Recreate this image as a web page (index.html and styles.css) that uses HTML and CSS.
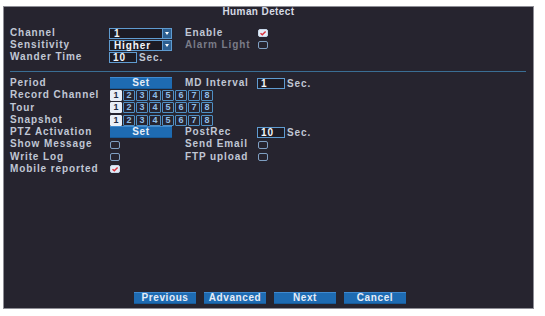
FILE: index.html
```html
<!DOCTYPE html>
<html>
<head>
<meta charset="utf-8">
<link rel="stylesheet" href="styles.css">
</head>
<body>
<div class="panel">
  <div class="title">Human Detect</div>
  <div class="form">
    <div class="lbl">Channel</div>
    <div class="ctl"><div class="select"><span class="val">1</span><span class="arrow"></span></div></div>
    <div class="lbl">Enable</div>
    <div class="ctl"><span class="chk on"><svg viewBox="0 0 10 8" width="10" height="8"><path d="M2.5 4.2 L4.3 5.8 L7.6 2.4" fill="none" stroke="#d8303c" stroke-width="1.4"/></svg></span></div>

    <div class="lbl">Sensitivity</div>
    <div class="ctl"><div class="select"><span class="val">Higher</span><span class="arrow"></span></div></div>
    <div class="lbl dim">Alarm Light</div>
    <div class="ctl"><span class="chk"></span></div>

    <div class="lbl">Wander Time</div>
    <div class="ctl wide"><span class="box small">10</span><span class="unit">Sec.</span></div>
  </div>
  <div class="divider"></div>
  <div class="form lower">
    <div class="lbl">Period</div>
    <div class="ctl"><span class="btn set">Set</span></div>
    <div class="lbl">MD Interval</div>
    <div class="ctl"><span class="box small">1</span><span class="unit">Sec.</span></div>

    <div class="lbl">Record Channel</div>
    <div class="ctl wide"><div class="nums"><span class="num sel">1</span><span class="num">2</span><span class="num">3</span><span class="num">4</span><span class="num">5</span><span class="num">6</span><span class="num">7</span><span class="num">8</span></div></div>

    <div class="lbl">Tour</div>
    <div class="ctl wide"><div class="nums"><span class="num sel">1</span><span class="num">2</span><span class="num">3</span><span class="num">4</span><span class="num">5</span><span class="num">6</span><span class="num">7</span><span class="num">8</span></div></div>

    <div class="lbl">Snapshot</div>
    <div class="ctl wide"><div class="nums"><span class="num sel">1</span><span class="num">2</span><span class="num">3</span><span class="num">4</span><span class="num">5</span><span class="num">6</span><span class="num">7</span><span class="num">8</span></div></div>

    <div class="lbl">PTZ Activation</div>
    <div class="ctl"><span class="btn set">Set</span></div>
    <div class="lbl">PostRec</div>
    <div class="ctl"><span class="box small">10</span><span class="unit">Sec.</span></div>

    <div class="lbl">Show Message</div>
    <div class="ctl"><span class="chk"></span></div>
    <div class="lbl">Send Email</div>
    <div class="ctl"><span class="chk"></span></div>

    <div class="lbl">Write Log</div>
    <div class="ctl"><span class="chk"></span></div>
    <div class="lbl">FTP upload</div>
    <div class="ctl"><span class="chk"></span></div>

    <div class="lbl">Mobile reported</div>
    <div class="ctl"><span class="chk on"><svg viewBox="0 0 10 8" width="10" height="8"><path d="M2.5 4.2 L4.3 5.8 L7.6 2.4" fill="none" stroke="#d8303c" stroke-width="1.4"/></svg></span></div>
  </div>
  <div class="spacer"></div>
  <div class="buttons">
    <span class="btn">Previous</span>
    <span class="btn">Advanced</span>
    <span class="btn">Next</span>
    <span class="btn">Cancel</span>
  </div>
</div>
</body>
</html>
```
FILE: styles.css
```css
html, body {
  margin: 0;
  padding: 0;
  background: #ffffff;
}
body {
  font-family: "Liberation Sans", Arial, sans-serif;
  font-size: 10px;
  font-weight: bold;
  letter-spacing: 0.9px;
}
.panel {
  margin: 6px 0 0 3px;
  width: 531px;
  height: 303px;
  box-sizing: border-box;
  border: 1px solid #8e8e96;
  background: #26242f;
  display: flex;
  flex-direction: column;
}
.title {
  height: 9px;
  line-height: 9px;
  text-align: center;
  color: #d6dae4;
  letter-spacing: 0.4px;
  margin-left: -20px;
}
.form {
  display: grid;
  grid-template-columns: 99px 76px 72px 1fr;
  grid-auto-rows: 12px;
  padding-left: 6px;
  margin-top: 11px;
}
.form.lower {
  margin-top: 5px;
  grid-auto-rows: 12.3px;
}
.lbl {
  color: #c0c7d5;
  line-height: 12px;
  white-space: nowrap;
}
.lbl.dim {
  color: #7a7c88;
}
.ctl {
  display: flex;
  align-items: center;
  gap: 3px;
}
.ctl.wide {
  grid-column: 2 / span 3;
}
.select {
  width: 63px;
  height: 11px;
  box-sizing: border-box;
  border: 1px solid #5f9bd0;
  background: #1c1b25;
  display: flex;
  align-items: center;
}
.select .val {
  flex: 1;
  color: #f4f6fa;
  padding-left: 4px;
  line-height: 9px;
}
.select .arrow {
  width: 8px;
  height: 9px;
  background: #2d5f90;
  border-left: 1px solid #5f9bd0;
  position: relative;
}
.select .arrow::after {
  content: "";
  position: absolute;
  left: 2px;
  top: 3px;
  border-left: 2px solid transparent;
  border-right: 2px solid transparent;
  border-top: 3px solid #ffffff;
}
.box {
  height: 11px;
  box-sizing: border-box;
  border: 1px solid #5f9bd0;
  background: #1c1b25;
  color: #f4f6fa;
  line-height: 9px;
  padding-left: 3px;
}
.box.small {
  width: 28px;
}
.unit {
  color: #c0c7d5;
  margin-left: -1px;
}
.chk {
  width: 10px;
  height: 8px;
  box-sizing: border-box;
  border: 1px solid #7f9fc2;
  border-radius: 2px;
  background: transparent;
  display: block;
  margin-left: 1px;
}
.chk.on {
  background: #e4ecf6;
  border-color: #c8d8ea;
}
.chk svg {
  display: block;
  margin: -1px 0 0 -1px;
}
.btn {
  display: inline-block;
  width: 62px;
  height: 12px;
  box-sizing: border-box;
  background: #1e6bb2;
  border-top: 1px solid #3f8ad0;
  border-bottom: 1px solid #175a98;
  color: #e6edf7;
  text-align: center;
  line-height: 10px;
  letter-spacing: 0.6px;
}
.btn.set {
  margin-left: 1px;
}
.nums {
  display: flex;
  gap: 1px;
  margin-left: 1px;
}
.num {
  width: 12px;
  height: 11px;
  box-sizing: border-box;
  border: 1px solid #4f8fc4;
  border-radius: 1px;
  color: #8fbde6;
  font-size: 9px;
  line-height: 9px;
  text-align: center;
  letter-spacing: 0;
}
.num.sel {
  background: #e8eef6;
  border-color: #e8eef6;
  color: #1c2a44;
}
.divider {
  height: 1px;
  margin: 8px 7px 0 6px;
  background: #3a6e94;
}
.spacer {
  flex: 1;
}
.buttons {
  display: flex;
  justify-content: center;
  gap: 8px;
  padding-left: 3px;
  margin-bottom: 4px;
}
```
